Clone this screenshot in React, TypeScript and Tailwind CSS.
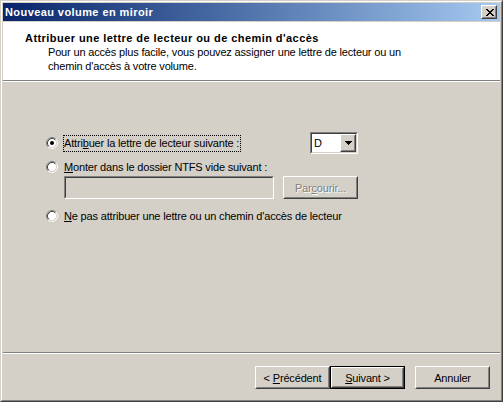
import React from "react";

function Radio({ checked = false }: { checked?: boolean }) {
  return (
    <svg width="12" height="12" viewBox="0 0 12 12" className="block">
      <circle cx="6" cy="6" r="4.5" fill="#ffffff" />
      <path d="M2.11 9.89 A5.5 5.5 0 0 1 9.89 2.11" stroke="#808080" strokeWidth="1" fill="none" />
      <path d="M9.89 2.11 A5.5 5.5 0 0 1 2.11 9.89" stroke="#ffffff" strokeWidth="1" fill="none" />
      <path d="M2.82 9.18 A4.5 4.5 0 0 1 9.18 2.82" stroke="#404040" strokeWidth="1" fill="none" />
      <path d="M9.18 2.82 A4.5 4.5 0 0 1 2.82 9.18" stroke="#d4d0c8" strokeWidth="1" fill="none" />
      {checked && <circle cx="6" cy="6" r="2" fill="#000000" />}
    </svg>
  );
}

function Raised({
  children,
  className = "",
  def = false,
}: {
  children?: React.ReactNode;
  className?: string;
  def?: boolean;
}) {
  const inner = (
    <div className="w-full h-full border border-t-white border-l-white border-r-[#404040] border-b-[#404040]">
      <div className="w-full h-full border border-t-[#d4d0c8] border-l-[#d4d0c8] border-r-[#808080] border-b-[#808080] bg-[#d4d0c8] flex items-center justify-center">
        {children}
      </div>
    </div>
  );
  if (def) {
    return <div className={`border border-black ${className}`}>{inner}</div>;
  }
  return <div className={className}>{inner}</div>;
}

function Sunken({
  children,
  className = "",
  bg = "bg-white",
}: {
  children?: React.ReactNode;
  className?: string;
  bg?: string;
}) {
  return (
    <div className={`border border-t-[#808080] border-l-[#808080] border-r-white border-b-white ${className}`}>
      <div className={`w-full h-full border border-t-[#404040] border-l-[#404040] border-r-[#d4d0c8] border-b-[#d4d0c8] ${bg} flex items-center`}>
        {children}
      </div>
    </div>
  );
}

function CloseGlyph() {
  const rows = [
    "XX....XX",
    ".XX..XX.",
    "..XXXX..",
    "...XX...",
    "..XXXX..",
    ".XX..XX.",
    "XX....XX",
  ];
  return (
    <svg width="8" height="7" viewBox="0 0 8 7" shapeRendering="crispEdges" className="block">
      {rows.map((r, y) =>
        r.split("").map((c, x) =>
          c === "X" ? <rect key={`${x}-${y}`} x={x} y={y} width="1" height="1" fill="#000" /> : null
        )
      )}
    </svg>
  );
}

function Arrow() {
  return (
    <svg width="7" height="4" viewBox="0 0 7 4" shapeRendering="crispEdges" className="block">
      <rect x="0" y="0" width="7" height="1" fill="#000" />
      <rect x="1" y="1" width="5" height="1" fill="#000" />
      <rect x="2" y="2" width="3" height="1" fill="#000" />
      <rect x="3" y="3" width="1" height="1" fill="#000" />
    </svg>
  );
}

export default function App() {
  return (
    <div className="w-[503px] h-[402px] font-['Liberation_Sans',Arial,sans-serif] text-[11px] leading-[14px] tracking-[-0.17px] text-black select-none">
      <div className="w-full h-full border border-t-[#d4d0c8] border-l-[#d4d0c8] border-r-[#404040] border-b-[#404040]">
        <div className="w-full h-full border border-t-white border-l-white border-r-[#808080] border-b-[#808080] bg-[#d4d0c8] p-px flex flex-col">
          {/* Title bar */}
          <div className="h-[18px] shrink-0 flex items-center bg-linear-to-r from-[#0a246a] to-[#a6caf0] pl-[2px] pr-[3px]">
            <span className="flex-1 font-bold tracking-[0.42px] text-white">Nouveau volume en miroir</span>
            <Raised className="w-[16px] h-[14px]">
              <div className="pl-px">
                <CloseGlyph />
              </div>
            </Raised>
          </div>
          <div className="h-px shrink-0" />

          {/* Header */}
          <div className="h-[58px] shrink-0 bg-white pt-[9px] pl-[22px]">
            <div className="font-bold tracking-[0.44px]">Attribuer une lettre de lecteur ou de chemin d'accès</div>
            <div className="pl-[23px]">
              Pour un accès plus facile, vous pouvez assigner une lettre de lecteur ou un
              <br />
              chemin d'accès à votre volume.
            </div>
          </div>
          <div className="h-px shrink-0 bg-[#808080]" />
          <div className="h-px shrink-0 bg-white" />

          {/* Body */}
          <div className="flex-1 pt-[50px] pl-[43px]">
            <div className="flex items-center h-[22px]">
              <div className="w-[17px]">
                <Radio checked />
              </div>
              <div className="w-[247px] flex">
                <span className="border border-dotted border-black leading-[15px] pr-px">
                  Attri<span className="underline">b</span>uer la lettre de lecteur suivante :
                </span>
              </div>
              <Sunken className="w-[48px] h-[22px]">
                <div className="flex-1 pl-[2px]">D</div>
                <Raised className="w-[16px] h-full">
                  <Arrow />
                </Raised>
              </Sunken>
            </div>

            <div className="flex items-center h-[18px] mt-[4px]">
              <div className="w-[17px]">
                <Radio />
              </div>
              <span className="pl-px">
                <span className="underline">M</span>onter dans le dossier NTFS vide suivant :
              </span>
            </div>

            <div className="flex h-[23px] pl-[18px] gap-[9px]">
              <Sunken className="w-[210px] h-[23px]" bg="bg-[#d4d0c8]" />
              <Raised className="w-[75px] h-[23px]">
                <span className="text-[#808080] [text-shadow:1px_1px_0_#ffffff]">
                  Par<span className="underline">c</span>ourir...
                </span>
              </Raised>
            </div>

            <div className="flex items-center h-[17px] mt-[8px]">
              <div className="w-[17px]">
                <Radio />
              </div>
              <span className="pl-px">
                <span className="underline">N</span>e pas attribuer une lettre ou un chemin d'accès de lecteur
              </span>
            </div>
          </div>

          <div className="h-px shrink-0 bg-[#808080]" />
          <div className="h-px shrink-0 bg-white" />

          {/* Buttons */}
          <div className="h-[45px] shrink-0 flex justify-end items-start pt-[12px] pr-[10px]">
            <Raised className="w-[75px] h-[23px]">
              <span>
                &lt; <span className="underline">P</span>récédent
              </span>
            </Raised>
            <Raised className="w-[75px] h-[23px]" def>
              <span>
                <span className="underline">S</span>uivant &gt;
              </span>
            </Raised>
            <Raised className="w-[75px] h-[23px] ml-[10px]">
              <span>Annuler</span>
            </Raised>
          </div>
        </div>
      </div>
    </div>
  );
}
